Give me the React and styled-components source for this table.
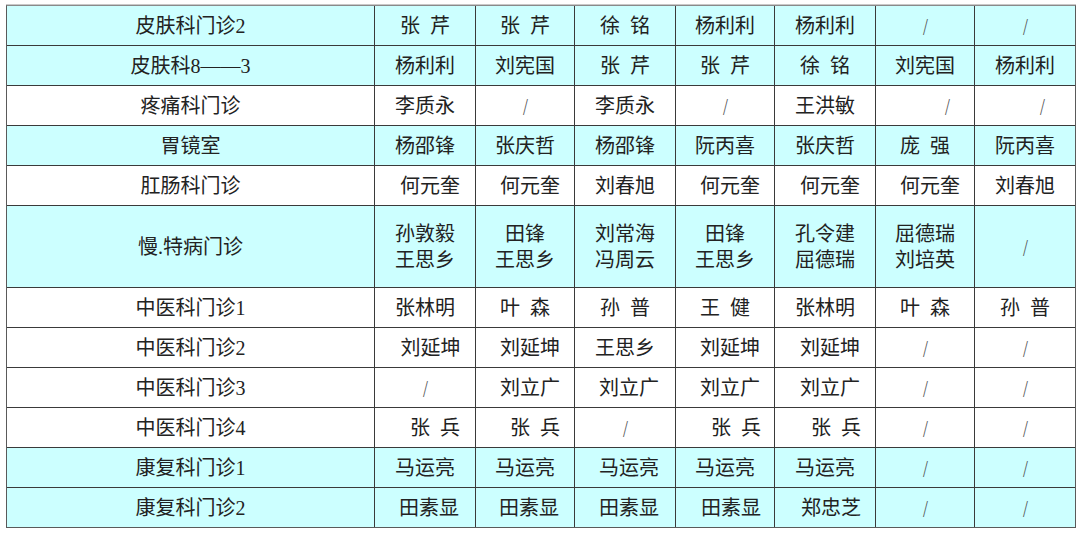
import React from "react";
import styled, { createGlobalStyle } from "styled-components";

const Global = createGlobalStyle`
  html, body { margin: 0; padding: 0; background: #ffffff; }
  body {
    font-family: "Liberation Serif", "Noto Sans CJK SC", serif;
    color: #1f1f1f;
  }
`;

const CYAN = "#ccffff";
const LINE = "#3a3a3a";
const COLS = "367px 100px 98px 100px 98px 100px 98px 100px";

const Page = styled.div`
  padding: 5px 0 0 6px;
`;

const Table = styled.div`
  display: flex;
  flex-direction: column;
  gap: 1px;
  width: 1068px;
  background: ${LINE};
  border: 1px solid #5a5a5a;
  border-top-color: #8a8a8a;
  box-shadow: 0 -1px 0 #c8c8c8;
`;

const Row = styled.div`
  display: grid;
  grid-template-columns: ${COLS};
  gap: 1px;
  height: ${(p) => (p.$tall ? 81 : 39)}px;
  background: ${LINE};
`;

const Cell = styled.div`
  background: ${(p) => (p.$cyan ? CYAN : "#ffffff")};
  display: flex;
  flex-direction: column;
  align-items: center;
  justify-content: center;
  padding-left: ${(p) => p.$shift || 0}px;
  font-size: 20px;
  line-height: 26px;
  white-space: pre;
  color: #222;
`;

const Slash = styled.span`
  color: #555;
  font-family: "DejaVu Sans", sans-serif;
  font-weight: 300;
  font-size: 20px;
  line-height: 26px;
  transform: scaleX(0.8);
`;

const S = "\u2002";

const rows = [
  { cyan: true, name: "皮肤科门诊2", cells: [`张${S}芹`, `张${S}芹`, `徐${S}铭`, "杨利利", "杨利利", "/", "/"] },
  { cyan: true, name: "皮肤科8——3", cells: ["杨利利", "刘宪国", `张${S}芹`, `张${S}芹`, `徐${S}铭`, "刘宪国", "杨利利"] },
  { cyan: false, name: "疼痛科门诊", cells: ["李质永", "/", "李质永", "/", "王洪敏", { t: "/", s: 44 }, { t: "/", s: 34 }] },
  { cyan: true, name: "胃镜室", cells: ["杨邵锋", "张庆哲", "杨邵锋", "阮丙喜", "张庆哲", `庞${S}强`, "阮丙喜"] },
  { cyan: false, name: "肛肠科门诊", cells: [{ t: "何元奎", s: 10 }, { t: "何元奎", s: 10 }, "刘春旭", { t: "何元奎", s: 10 }, { t: "何元奎", s: 10 }, { t: "何元奎", s: 10 }, "刘春旭"] },
  {
    cyan: true,
    tall: true,
    name: "慢.特病门诊",
    cells: [
      ["孙敦毅", "王思乡"],
      ["田锋", "王思乡"],
      ["刘常海", "冯周云"],
      ["田锋", "王思乡"],
      ["孔令建", "屈德瑞"],
      ["屈德瑞", "刘培英"],
      "/",
    ],
  },
  { cyan: false, name: "中医科门诊1", cells: ["张林明", `叶${S}森`, `孙${S}普`, `王${S}健`, "张林明", `叶${S}森`, `孙${S}普`] },
  { cyan: false, name: "中医科门诊2", cells: [{ t: "刘延坤", s: 11 }, { t: "刘延坤", s: 10 }, "王思乡", { t: "刘延坤", s: 10 }, { t: "刘延坤", s: 10 }, "/", "/"] },
  { cyan: false, name: "中医科门诊3", cells: ["/", { t: "刘立广", s: 10 }, { t: "刘立广", s: 8 }, { t: "刘立广", s: 10 }, { t: "刘立广", s: 10 }, "/", "/"] },
  { cyan: false, name: "中医科门诊4", cells: [{ t: `张${S}兵`, s: 20 }, { t: `张${S}兵`, s: 20 }, "/", { t: `张${S}兵`, s: 22 }, { t: `张${S}兵`, s: 22 }, "/", "/"] },
  { cyan: true, name: "康复科门诊1", cells: ["马运亮", "马运亮", { t: "马运亮", s: 8 }, "马运亮", "马运亮", "/", "/"] },
  { cyan: true, name: "康复科门诊2", cells: [{ t: "田素显", s: 8 }, { t: "田素显", s: 8 }, { t: "田素显", s: 8 }, { t: "田素显", s: 12 }, { t: "郑忠芝", s: 12 }, "/", "/"] },
];

function renderText(t) {
  if (t === "/") return <Slash>/</Slash>;
  return t;
}

function DataCell({ value, cyan }) {
  if (Array.isArray(value)) {
    return (
      <Cell $cyan={cyan}>
        {value.map((line, i) => (
          <span key={i}>{line}</span>
        ))}
      </Cell>
    );
  }
  if (typeof value === "object") {
    return (
      <Cell $cyan={cyan} $shift={value.s}>
        {renderText(value.t)}
      </Cell>
    );
  }
  return <Cell $cyan={cyan}>{renderText(value)}</Cell>;
}

export default function App() {
  return (
    <>
      <Global />
      <Page>
        <Table>
          {rows.map((r, i) => (
            <Row key={i} $tall={r.tall}>
              <Cell $cyan={r.cyan}>{r.name}</Cell>
              {r.cells.map((c, j) => (
                <DataCell key={j} value={c} cyan={r.cyan} />
              ))}
            </Row>
          ))}
        </Table>
      </Page>
    </>
  );
}
